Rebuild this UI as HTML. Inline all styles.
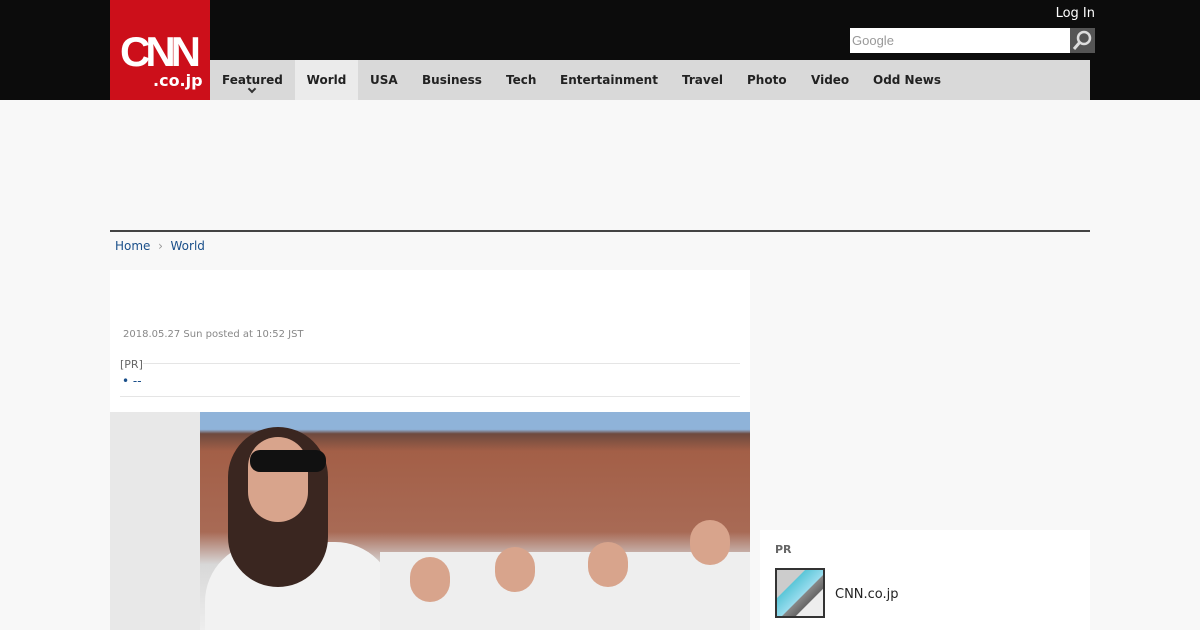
<!DOCTYPE html>
<html><head><meta charset="utf-8"><style>
*{margin:0;padding:0;box-sizing:border-box}
body{width:1200px;height:630px;overflow:hidden;background:#f8f8f8;font-family:"DejaVu Sans","Liberation Sans",sans-serif;position:relative}
.top{position:absolute;left:0;top:0;width:1200px;height:100px;background:#0c0c0c}
.logo{position:absolute;left:110px;top:0;width:100px;height:100px;background:#cc0f1a;color:#fff;overflow:hidden}
.logo .c{position:absolute;left:10px;top:28px;font:bold 42px "Liberation Sans",sans-serif;letter-spacing:-5px}
.logo .d{position:absolute;left:43px;top:71px;font:bold 16px "DejaVu Sans",sans-serif}
.nav{position:absolute;left:210px;top:60px;width:880px;height:40px;background:#d9d9d9}
.nav div{position:absolute;top:0;font-size:12px;font-weight:bold;color:#222;line-height:40px}
.nav .w{background:#ebebeb;left:85px;width:63px;text-align:center}
.login{position:absolute;right:105px;top:6px;color:#fff;font-size:13px}
.search{position:absolute;left:850px;top:28px;width:220px;height:25px;background:#fff;font:13px "Liberation Sans",sans-serif;color:#999;padding:5px 2px}
.sb{position:absolute;left:1070px;top:28px;width:25px;height:25px;background:#555}
.rule{position:absolute;left:110px;top:230px;width:980px;height:2px;background:#444}
.bc{position:absolute;left:115px;top:239px;font-size:12px;color:#1a4f8a}
.card{position:absolute;left:110px;top:270px;width:640px;height:360px;background:#fff}
.date{position:absolute;left:13px;top:59px;font-size:10px;color:#888}
.pr{position:absolute;left:10px;top:88px;font-size:11px;color:#666}
.l1{position:absolute;left:33px;top:93px;width:597px;height:1px;background:#e5e5e5}
.l2{position:absolute;left:10px;top:126px;width:620px;height:1px;background:#e5e5e5}
.dash{position:absolute;left:12px;top:104px;font-size:12px;color:#1a4f8a}
.photo{position:absolute;left:0;top:142px;width:640px;height:218px;background:linear-gradient(#8fb3d9 0,#8fb3d9 8%,#6e4a3e 10%,#a35f47 18%,#a86a55 55%,#d8d8d8 70%,#eee 100%);overflow:hidden}
</style></head><body>
<div class="top"></div>
<div class="logo"><span class="c">CNN</span><span class="d">.co.jp</span></div>
<div class="login">Log In</div>
<div class="search">Google</div><div class="sb"><svg width="25" height="25"><circle cx="14" cy="10" r="6" fill="none" stroke="#ddd" stroke-width="2.5"/><line x1="10" y1="14" x2="4" y2="21" stroke="#ddd" stroke-width="3"/></svg></div>
<div class="nav"><div style="left:12px">Featured</div><div class="w">World</div><div style="left:160px">USA</div><div style="left:212px">Business</div><div style="left:296px">Tech</div><div style="left:350px">Entertainment</div><div style="left:472px">Travel</div><div style="left:537px">Photo</div><div style="left:601px">Video</div><div style="left:663px">Odd News</div></div>
<div style="position:absolute;left:249px;top:86px;width:6px;height:6px;border-right:2px solid #333;border-bottom:2px solid #333;transform:rotate(45deg)"></div>
<div class="rule"></div>
<div class="bc">Home &nbsp;<span style="color:#999">&rsaquo;</span>&nbsp; World</div>
<div class="card">
<div class="date">2018.05.27 Sun posted at 10:52 JST</div>
<div class="pr">[PR]</div>
<div class="l1"></div><div class="l2"></div>
<div class="dash">• --</div>
<div class="photo">
<div style="position:absolute;left:0;top:0;width:90px;height:218px;background:#e8e8e8"></div>
<div style="position:absolute;left:95px;top:130px;width:190px;height:100px;background:#f2f2f2;border-radius:60px 60px 0 0"></div>
<div style="position:absolute;left:118px;top:15px;width:100px;height:160px;background:#3a2620;border-radius:50px"></div>
<div style="position:absolute;left:138px;top:25px;width:60px;height:85px;background:#d8a48c;border-radius:30px"></div>
<div style="position:absolute;left:140px;top:38px;width:76px;height:22px;background:#111;border-radius:10px"></div>
<div style="position:absolute;left:270px;top:140px;width:370px;height:80px;background:#eee"></div>
<div style="position:absolute;left:300px;top:145px;width:40px;height:45px;background:#d8a48c;border-radius:20px"></div>
<div style="position:absolute;left:385px;top:135px;width:40px;height:45px;background:#d8a48c;border-radius:20px"></div>
<div style="position:absolute;left:478px;top:130px;width:40px;height:45px;background:#d8a48c;border-radius:20px"></div>
<div style="position:absolute;left:580px;top:108px;width:40px;height:45px;background:#d8a48c;border-radius:20px"></div>
</div>
</div>
<div style="position:absolute;left:760px;top:530px;width:330px;height:100px;background:#fff">
<div style="position:absolute;left:15px;top:13px;font-size:11px;font-weight:bold;color:#666">PR</div>
<div style="position:absolute;left:15px;top:38px;width:50px;height:50px;border:2px solid #333;background:linear-gradient(135deg,#ccc 30%,#5cc6d8 31%,#9de 55%,#888 56%,#666 70%,#eee 71%)"></div>
<div style="position:absolute;left:75px;top:57px;font-size:13px;color:#222">CNN.co.jp</div>
</div>
</body></html>
